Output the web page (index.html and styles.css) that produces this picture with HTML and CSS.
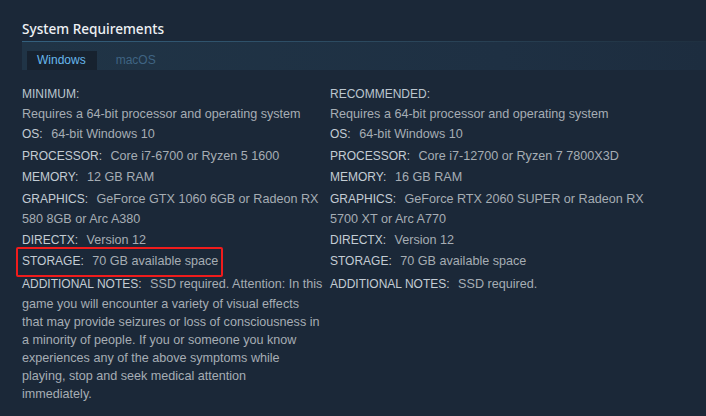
FILE: index.html
```html
<!DOCTYPE html>
<html>
<head>
<meta charset="utf-8">
<link rel="stylesheet" href="styles.css">
</head>
<body>
<div class="sysreq">
  <h2 class="title">System Requirements</h2>
  <div class="tabs">
    <div class="tab active">Windows</div>
    <div class="tab">macOS</div>
  </div>
  <div class="cols">
    <div class="col left">
      <div class="head">MINIMUM:</div>
      <ul>
        <li>Requires a 64-bit processor and operating system</li>
        <li><span class="lbl">OS:</span> 64-bit Windows 10</li>
        <li><span class="lbl">PROCESSOR:</span> Core i7-6700 or Ryzen 5 1600</li>
        <li><span class="lbl">MEMORY:</span> 12 GB RAM</li>
        <li><span class="lbl">GRAPHICS:</span> GeForce GTX 1060 6GB or Radeon RX 580 8GB or Arc A380</li>
        <li><span class="lbl">DIRECTX:</span> Version 12</li>
        <li class="storage"><span class="lbl">STORAGE:</span> 70 GB available space<span class="mark"></span></li>
        <li class="notes"><span class="lbl">ADDITIONAL NOTES:</span> SSD required. Attention: In this game you will encounter a variety of visual effects that may provide seizures or loss of consciousness in a minority of people. If you or someone you know experiences any of the above symptoms while playing, stop and seek medical attention<br>immediately.</li>
      </ul>
    </div>
    <div class="col right">
      <div class="head">RECOMMENDED:</div>
      <ul>
        <li>Requires a 64-bit processor and operating system</li>
        <li><span class="lbl">OS:</span> 64-bit Windows 10</li>
        <li><span class="lbl">PROCESSOR:</span> Core i7-12700 or Ryzen 7 7800X3D</li>
        <li><span class="lbl">MEMORY:</span> 16 GB RAM</li>
        <li><span class="lbl">GRAPHICS:</span> GeForce RTX 2060 SUPER or Radeon RX 5700 XT or Arc A770</li>
        <li><span class="lbl">DIRECTX:</span> Version 12</li>
        <li><span class="lbl">STORAGE:</span> 70 GB available space</li>
        <li class="notes"><span class="lbl">ADDITIONAL NOTES:</span> SSD required.</li>
      </ul>
    </div>
  </div>
</div>
</body>
</html>
```
FILE: styles.css
```css
html, body {
  margin: 0;
  padding: 0;
  background: #1b2838;
  width: 706px;
  height: 416px;
  overflow: hidden;
}
.sysreq {
  padding: 18px 0 0 22px;
  font-family: "Liberation Sans", Arial, sans-serif;
}
.title {
  margin: 0;
  font-family: "Noto Sans", sans-serif;
  font-weight: 500;
  font-size: 13.6px;
  line-height: 22px;
  color: #eef1f4;
  height: 23px;
}
.tabs {
  display: flex;
  align-items: flex-end;
  height: 28px;
  padding-left: 5px;
  border-top: 1px solid #2e4e66;
  border-image: linear-gradient(to right, #34607e 0%, #2a4458 60%, #1f3040 100%) 1;
  background: linear-gradient(to right, #203446 0%, #1e3043 70%, #1d2d3f 100%);
}
.tab {
  height: 19px;
  line-height: 19px;
  padding: 0 11px 0 10px;
  font-size: 12px;
  color: #3f6483;
}
.tab.active {
  background: #17222f;
  color: #67b8ec;
}
.tab + .tab {
  padding-left: 19px;
}
.cols {
  display: flex;
  margin-top: 14px;
}
.col.left {
  width: 301px;
  margin-right: 7px;
}
.col.right {
  width: 345px;
}
.head {
  font-size: 12px;
  line-height: 20px;
  color: #bcc6cf;
}
ul {
  list-style: none;
  margin: 0;
  padding: 0;
}
li {
  font-size: 12.6px;
  line-height: 20px;
  margin-bottom: 1px;
  color: #a6adb4;
}
li:first-child {
  margin-bottom: 0;
}
li:nth-child(2),
li:nth-child(4),
li:nth-child(7) {
  margin-bottom: 2px;
}
.lbl {
  font-size: 12px;
  color: #c3ccd4;
  margin-right: 5px;
}
li.notes {
  line-height: 18px;
}
li.notes .lbl {
  line-height: 22px;
}
.storage {
  position: relative;
}
.mark {
  position: absolute;
  left: -6px;
  top: -4px;
  width: 203px;
  height: 26px;
  border: 2px solid #f01c1c;
  border-radius: 2px;
}
```
